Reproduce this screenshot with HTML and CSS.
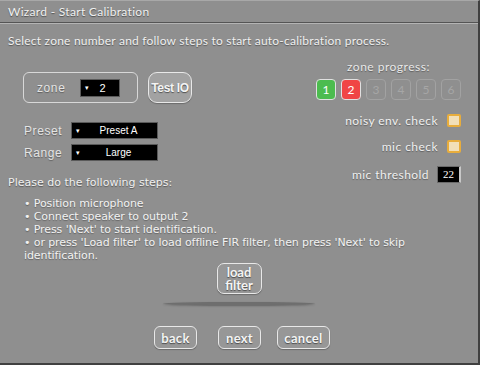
FILE: index.html
```html
<!DOCTYPE html>
<html lang="en">
<head>
  <meta charset="UTF-8">
  <title>Wizard - Start Calibration</title>
  <link rel="stylesheet" href="styles.css">
</head>
<body>
  <div class="window">
    <div class="titlebar">Wizard - Start Calibration</div>

    <p class="intro">Select zone number and follow steps to start auto-calibration process.</p>

    <div class="main">
      <div class="left">
        <div class="zone-row">
          <div class="zone-box">
            <span class="label">zone</span>
            <div class="field zone-field"><span class="arrow">&#9662;</span><span class="value">2</span></div>
          </div>
          <button class="btn test-btn">Test IO</button>
        </div>

        <div class="select-row">
          <span class="label">Preset</span>
          <div class="field wide"><span class="arrow">&#9662;</span><span class="value">Preset A</span></div>
        </div>
        <div class="select-row">
          <span class="label">Range</span>
          <div class="field wide"><span class="arrow">&#9662;</span><span class="value">Large</span></div>
        </div>
      </div>

      <div class="right">
        <div class="progress">
          <div class="progress-title">zone progress:</div>
          <div class="progress-boxes">
            <span class="pbox done">1</span>
            <span class="pbox current">2</span>
            <span class="pbox">3</span>
            <span class="pbox">4</span>
            <span class="pbox">5</span>
            <span class="pbox">6</span>
          </div>
        </div>
        <div class="check-row"><span>noisy env. check</span><span class="check"></span></div>
        <div class="check-row"><span>mic check</span><span class="check"></span></div>
        <div class="check-row threshold"><span>mic threshold</span><span class="num">22</span></div>
      </div>

      <div class="steps-title">Please do the following steps:</div>

      <ul class="steps">
        <li>&bull; Position microphone</li>
        <li>&bull; Connect speaker to output 2</li>
        <li>&bull; Press 'Next' to start identification.</li>
        <li>&bull; or press 'Load filter' to load offline FIR filter, then press 'Next' to skip identification.</li>
      </ul>
    </div>

    <div class="load">
      <button class="btn load-btn"><span>load</span><span>filter</span></button>
    </div>

    <div class="separator"></div>

    <div class="nav">
      <button class="btn nav-btn back">back</button>
      <button class="btn nav-btn next">next</button>
      <button class="btn nav-btn cancel">cancel</button>
    </div>
  </div>
</body>
</html>
```

FILE: styles.css
```css
html, body {
  margin: 0;
  padding: 0;
}

body {
  width: 480px;
  height: 365px;
  overflow: hidden;
  background: #8f8f8f;
}

.window {
  box-sizing: border-box;
  width: 480px;
  height: 365px;
  background: #8f8f8f;
  border-top: 1px solid #a8a8a8;
  border-right: 2px solid #404040;
  border-bottom: 2px solid #404040;
  font-family: Lato, sans-serif;
  color: #f0f0f0;
}

.titlebar {
  height: 21px;
  line-height: 21px;
  padding-left: 8px;
  font-size: 12px;
  letter-spacing: 0.3px;
  text-shadow: 0 1px 1px rgba(0,0,0,0.45);
  border-bottom: 1px solid #555;
  box-shadow: 0 1px 0 #b4b4b4;
}

.intro {
  margin: 10px 0 0 8px;
  font-size: 12px;
  letter-spacing: 0.22px;
  text-shadow: 0 1px 1px rgba(0,0,0,0.4);
}

.main {
  display: grid;
  grid-template-columns: 1fr auto;
  grid-template-rows: auto auto auto;
}

.left {
  padding: 24px 0 0 23px;
}

.zone-row {
  display: flex;
  align-items: center;
  gap: 10px;
}

.zone-box {
  box-sizing: border-box;
  width: 115px;
  height: 31px;
  border: 1px solid #d8d8d8;
  border-radius: 6px;
  display: flex;
  align-items: center;
  padding-left: 13px;
  gap: 15px;
}

.label {
  font-family: "Liberation Sans", Arial, sans-serif;
  font-size: 12px;
  color: #e4e4e4;
  letter-spacing: 0.6px;
  text-shadow: 0 1px 1px rgba(0,0,0,0.35);
}

.field {
  box-sizing: border-box;
  background: #000;
  border: 1px solid #5a5a5a;
  color: #fff;
  font-family: "Liberation Sans", Arial, sans-serif;
  font-size: 10px;
  display: flex;
  align-items: center;
}

.arrow {
  font-size: 7px;
  padding-left: 4px;
}

.value {
  flex: 1;
  text-align: center;
}

.zone-field {
  width: 40px;
  height: 18px;
}

.zone-field .value {
  text-align: left;
  padding-left: 10px;
  font-size: 11px;
}

.btn {
  font-family: Lato, sans-serif;
  font-weight: bold;
  color: #f4f4f4;
  background: #979797;
  border: 1px solid #e8e8e8;
  border-radius: 7px;
  padding: 0;
  text-shadow: 0 1px 1px rgba(0,0,0,0.5);
  box-shadow: 0 1px 1px rgba(0,0,0,0.25);
  cursor: pointer;
}

.test-btn {
  width: 44px;
  height: 31px;
  border-radius: 9px;
  background: #a2a2a2;
  font-family: "Liberation Sans", Arial, sans-serif;
  font-size: 12px;
  letter-spacing: -0.3px;
}

.select-row {
  display: flex;
  align-items: center;
  margin-top: 5px;
}

.zone-row + .select-row {
  margin-top: 19px;
}

.select-row .label {
  width: 47px;
  padding-left: 1px;
}

.field.wide {
  width: 87px;
  height: 17px;
}

.right {
  grid-column: 2;
  grid-row: 1 / 3;
  padding: 11px 17px 6px 0;
  display: flex;
  flex-direction: column;
  align-items: flex-end;
}

.progress {
  display: flex;
  flex-direction: column;
  align-items: center;
}

.progress-title {
  font-size: 12px;
  color: #e8e8e8;
  letter-spacing: 0.5px;
  text-shadow: 0 1px 1px rgba(0,0,0,0.35);
}

.progress-boxes {
  display: flex;
  gap: 5px;
  margin-top: 5px;
}

.pbox {
  box-sizing: border-box;
  width: 20px;
  height: 21px;
  border: 1px solid #a2a2a2;
  border-radius: 4px;
  font-size: 12px;
  color: #a6a6a6;
  display: flex;
  align-items: center;
  justify-content: center;
}

.pbox.done {
  background: #4cbc4f;
  border-color: #e0e0e0;
  color: #fff;
}

.pbox.current {
  background: #f04545;
  border-color: #e0e0e0;
  color: #fff;
}

.check-row {
  display: flex;
  align-items: center;
  gap: 9px;
  font-size: 12px;
  letter-spacing: 0.45px;
  color: #f0f0f0;
  text-shadow: 0 1px 1px rgba(0,0,0,0.35);
  margin-top: 13px;
}

.check-row + .check-row {
  margin-top: 11px;
}

.check {
  box-sizing: border-box;
  width: 14px;
  height: 13px;
  background: #f2dfb8;
  border: 2px solid #e8ad3c;
  border-radius: 2px;
}

.check-row.threshold {
  margin-top: 12px;
  gap: 8px;
}

.num {
  box-sizing: border-box;
  width: 24px;
  height: 17px;
  background: #000;
  border: 1px solid #6a6a6a;
  border-right: 2px solid #c8c8c8;
  font-family: "Liberation Serif", serif;
  font-size: 11px;
  color: #fff;
  text-align: center;
  line-height: 15px;
  text-shadow: none;
  letter-spacing: 0;
}

.steps-title {
  grid-column: 1;
  grid-row: 2;
  align-self: end;
  margin-left: 8px;
  font-family: "DejaVu Sans", Verdana, sans-serif;
  font-size: 11px;
  color: #f0f0f0;
  text-shadow: 0 1px 1px rgba(0,0,0,0.4);
}

.steps {
  grid-column: 1 / 3;
  grid-row: 3;
  list-style: none;
  margin: 8px 0 0 0;
  padding: 0 60px 0 24px;
  font-family: "DejaVu Sans", Verdana, sans-serif;
  font-size: 11px;
  line-height: 13px;
  letter-spacing: -0.1px;
  color: #f2f2f2;
  text-shadow: 0 1px 1px rgba(0,0,0,0.3);
}

.load {
  display: flex;
  justify-content: center;
  margin-top: 1px;
}

.load-btn {
  width: 45px;
  height: 31px;
  font-size: 13px;
  display: flex;
  flex-direction: column;
  align-items: center;
  justify-content: center;
}

.load-btn span {
  display: block;
  line-height: 13px;
}

.separator {
  width: 152px;
  height: 3px;
  margin: 8px auto 0;
  border-radius: 50%;
  background: #6e6e6e;
  box-shadow: 0 1px 2px rgba(0,0,0,0.3);
}

.nav {
  display: flex;
  justify-content: center;
  margin-top: 21px;
  padding-left: 6px;
}

.nav-btn {
  height: 23px;
  padding: 0;
  font-size: 13px;
  letter-spacing: 0.3px;
  border-radius: 6px;
}

.back,
.next {
  width: 43px;
}

.next {
  margin: 0 16px 0 21px;
}

.cancel {
  width: 53px;
}
```
